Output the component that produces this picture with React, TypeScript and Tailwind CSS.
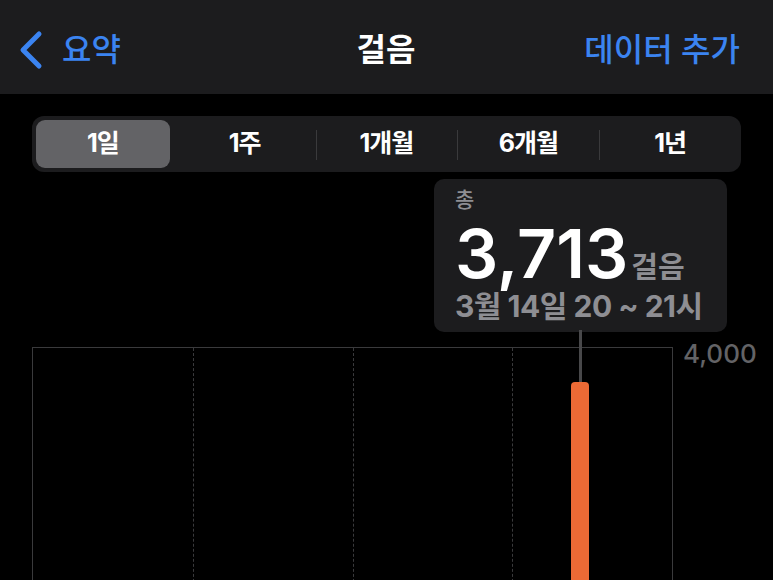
const ranges = ["1일", "1주", "1개월", "6개월", "1년"];
const hourly: number[] = Array.from({ length: 24 }, (_, i) => (i === 20 ? 3713 : 0));
const maxSteps = 4000;

const font = { fontFamily: 'Inter, "Noto Sans CJK KR", sans-serif' };

const Header = () => (
    <div className="h-[94px] bg-[#1c1c1e] flex items-center justify-between pl-[18px] pr-[33px] pt-[6px]">
        <div className="flex items-center gap-[18px] text-[#3b84f1] w-[220px]">
            <svg width="26" height="40" viewBox="0 0 26 40" fill="none">
                <path d="M21 4 L5 20 L21 36" stroke="currentColor" strokeWidth="5" strokeLinecap="round" strokeLinejoin="round" />
            </svg>
            <span className="text-[32px] font-medium leading-none">요약</span>
        </div>
        <div className="text-white text-[32px] font-bold leading-none ml-[14px]">걸음</div>
        <div className="w-[220px] text-right text-[#3b84f1] text-[32px] font-medium leading-none">데이터 추가</div>
    </div>
);

const RangePicker = () => (
    <div className="mt-[22px] mx-[32px] h-[56px] bg-[#1c1c1e] rounded-[12px] flex items-center">
        {ranges.map((r, i) => (
            <div key={r} className="flex-1 h-full relative flex items-center justify-center">
                {i === 0 && <div className="absolute inset-[4px] bg-[#636366] rounded-[9px]" />}
                {i > 1 && <div className="absolute left-0 top-[14px] bottom-[12px] w-px bg-[#3a3a3c]" />}
                <span className="relative text-white text-[25px] font-bold tracking-[-1px]">{r}</span>
            </div>
        ))}
    </div>
);

const Callout = () => (
    <div className="mt-[7px] ml-[434px] w-[293px] h-[153px] bg-[#1c1c1e] rounded-[10px] px-[21px] pt-[9px]">
        <div className="text-[#8e8e93] text-[21px] font-medium leading-[24px]">총</div>
        <div className="flex items-baseline leading-none mt-[7px]">
            <span className="text-white text-[68px] font-semibold">3,713</span>
            <span className="text-[#8e8e93] text-[29px] font-semibold ml-[3px]">걸음</span>
        </div>
        <div className="text-[#8e8e93] text-[30px] font-bold leading-none mt-[4px] tracking-[-0.5px]">3월 14일 20 ~ 21시</div>
    </div>
);

const Chart = () => (
    <div className="flex mt-[15px] ml-[32px]">
        <div className="relative w-[641px] h-[501px] border-l border-t border-r border-[#3a3a3c] grid grid-cols-4">
            <div />
            <div className="border-l border-dashed border-[#3a3a3c]" />
            <div className="border-l border-dashed border-[#3a3a3c]" />
            <div className="border-l border-dashed border-[#3a3a3c]" />
            <div className="absolute inset-0 flex items-end">
                {hourly.map((v, i) => (
                    <div key={i} className="flex-1 h-full flex items-end justify-center">
                        {v > 0 && (
                            <div className="relative w-[18px] ml-[2px] bg-[#ec6a35] rounded-t-[4px]" style={{ height: `${(v / maxSteps) * 100 + 0.3}%` }}>
                                <div className="absolute left-[8px] bottom-full w-[3px] h-[52px] bg-[#48484a]" />
                            </div>
                        )}
                    </div>
                ))}
            </div>
        </div>
        <div className="ml-[10px] -mt-[13px] text-[#636366] text-[26px] font-medium h-[30px]">4,000</div>
    </div>
);

export default function App() {
    return (
        <div className="w-[773px] h-[580px] overflow-hidden bg-black" style={font}>
            <Header />
            <RangePicker />
            <Callout />
            <Chart />
        </div>
    );
}
